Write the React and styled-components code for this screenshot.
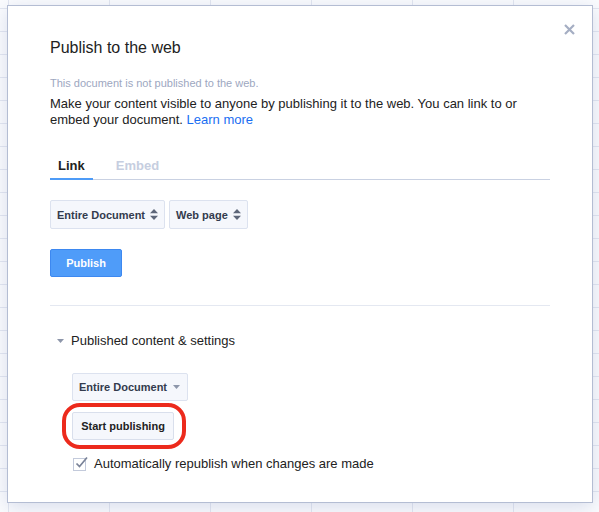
import React from "react";
import styled, { createGlobalStyle } from "styled-components";

const GlobalStyle = createGlobalStyle`
  html, body {
    margin: 0;
    padding: 0;
  }
  body {
    width: 599px;
    height: 512px;
    overflow: hidden;
    font-family: "Liberation Sans", Arial, sans-serif;
    color: #222;
    background-color: #fbfcfe;
    background-image:
      repeating-linear-gradient(90deg, transparent 0 8px, #e3e7f1 8px 9px, transparent 9px 101px),
      repeating-linear-gradient(180deg, transparent 0 8px, #e3e7f1 8px 9px, transparent 9px 23px);
  }
`;

function SortArrows() {
  return (
    <svg width="8" height="11" viewBox="0 0 8 11">
      <path d="M4 0 L8 4.2 L0 4.2 Z M4 11 L8 6.8 L0 6.8 Z" fill="#5d6679" />
    </svg>
  );
}

function Caret({ color = "#8d96aa" }) {
  return (
    <svg width="7" height="4" viewBox="0 0 7 4">
      <path d="M0 0 L7 0 L3.5 4 Z" fill={color} />
    </svg>
  );
}

function App() {
  return (
    <>
      <GlobalStyle />
      <Page>
        <Dialog>
          <Close aria-label="Close">
            <svg width="11" height="11" viewBox="0 0 11 11">
              <path d="M1 1 L10 10 M10 1 L1 10" stroke="#a5aec3" strokeWidth="2.2" />
            </svg>
          </Close>
          <Title>Publish to the web</Title>
          <Status>This document is not published to the web.</Status>
          <Description>
            Make your content visible to anyone by publishing it to the web. You
            can link to or embed your document. <a href="#">Learn more</a>
          </Description>

          <Tabs>
            <Tab active>Link</Tab>
            <Tab>Embed</Tab>
          </Tabs>

          <SelectRow>
            <Select>
              Entire Document
              <SortArrows />
            </Select>
            <Select>
              Web page
              <SortArrows />
            </Select>
          </SelectRow>

          <PublishButton>Publish</PublishButton>

          <Divider />

          <SectionHeader>
            <Caret />
            Published content &amp; settings
          </SectionHeader>

          <Settings>
            <Select small>
              Entire Document
              <Caret />
            </Select>
            <Highlight>
              <GreyButton>Start publishing</GreyButton>
            </Highlight>
            <CheckRow>
              <CheckBox>
                <svg width="15" height="14" viewBox="0 0 15 14">
                  <path
                    d="M2.5 7.5 L5.5 10.5 L13 1.5"
                    fill="none"
                    stroke="#7a8398"
                    strokeWidth="1.7"
                  />
                </svg>
              </CheckBox>
              Automatically republish when changes are made
            </CheckRow>
          </Settings>
        </Dialog>
      </Page>
    </>
  );
}

export default App;

const Page = styled.div`
  padding: 5px 0 0 7px;
`;

const Dialog = styled.div`
  position: relative;
  box-sizing: border-box;
  width: 586px;
  height: 498px;
  background: #fff;
  border: 1px solid #b4bdd3;
  box-shadow: 0 4px 18px rgba(90, 110, 170, 0.22);
  padding: 32px 42px 0 42px;
`;

const Close = styled.div`
  position: absolute;
  top: 18px;
  right: 17px;
  width: 11px;
  height: 11px;
  line-height: 0;
`;

const Title = styled.h1`
  margin: 0;
  font-size: 16px;
  line-height: 20px;
  font-weight: normal;
  color: #222;
`;

const Status = styled.div`
  margin-top: 18px;
  font-size: 11px;
  line-height: 14px;
  color: #9da7bf;
`;

const Description = styled.p`
  margin: 6px 0 0;
  font-size: 13px;
  line-height: 16px;
  color: #222;
  a {
    color: #1a6ef2;
    text-decoration: none;
  }
`;

const Tabs = styled.div`
  display: flex;
  gap: 15px;
  margin-top: 30px;
  border-bottom: 1px solid #c9d1e2;
`;

const Tab = styled.div`
  padding: 0 8px 4px;
  margin-bottom: -1px;
  font-size: 13px;
  line-height: 16px;
  font-weight: bold;
  color: ${(p) => (p.active ? "#222" : "#c6cee0")};
  border-bottom: 2px solid ${(p) => (p.active ? "#4d9bf7" : "transparent")};
`;

const SelectRow = styled.div`
  display: flex;
  gap: 4px;
  margin-top: 20px;
`;

const Select = styled.div`
  box-sizing: border-box;
  display: inline-flex;
  align-items: center;
  gap: ${(p) => (p.small ? "6px" : "5px")};
  height: ${(p) => (p.small ? "28px" : "29px")};
  padding: ${(p) => (p.small ? "0 7px 0 6px" : "0 6px 0 6px")};
  background: #f5f7fc;
  border: 1px solid #dce2ef;
  border-radius: 2px;
  font-size: 11px;
  font-weight: bold;
  color: #333b4d;
  align-self: flex-start;
`;

const PublishButton = styled.button`
  display: block;
  box-sizing: border-box;
  margin-top: 20px;
  width: 72px;
  height: 28px;
  padding: 0;
  background: #4f9cf9;
  border: 1px solid #3d88f0;
  border-radius: 2px;
  color: #fff;
  font-family: inherit;
  font-size: 11px;
  font-weight: bold;
`;

const Divider = styled.hr`
  margin: 28px 0 0;
  border: 0;
  border-top: 1px solid #e4e8f1;
`;

const SectionHeader = styled.div`
  display: flex;
  align-items: center;
  gap: 7px;
  margin-top: 27px;
  padding-left: 7px;
  font-size: 13px;
  line-height: 16px;
  color: #222;
`;

const Settings = styled.div`
  display: flex;
  flex-direction: column;
  align-items: flex-start;
  padding-left: 22px;
  margin-top: 24px;
`;

const Highlight = styled.div`
  position: relative;
  margin-top: 11px;
  &::after {
    content: "";
    position: absolute;
    top: -9px;
    left: -10px;
    right: -12px;
    bottom: -9px;
    border: 4px solid #ec2a1c;
    border-radius: 18px;
    box-sizing: border-box;
    pointer-events: none;
  }
`;

const GreyButton = styled.button`
  display: block;
  box-sizing: border-box;
  width: 102px;
  height: 28px;
  padding: 0;
  background: #f5f7fc;
  border: 1px solid #d9dfec;
  border-radius: 2px;
  color: #222;
  font-family: inherit;
  font-size: 11px;
  font-weight: bold;
`;

const CheckRow = styled.label`
  display: flex;
  align-items: center;
  gap: 8px;
  margin-top: 16px;
  margin-left: 1px;
  font-size: 13px;
  line-height: 16px;
  color: #222;
`;

const CheckBox = styled.span`
  position: relative;
  box-sizing: border-box;
  width: 13px;
  height: 13px;
  border: 1px solid #c3cadb;
  background: #fff;
  svg {
    position: absolute;
    left: 0;
    top: -3px;
  }
`;
